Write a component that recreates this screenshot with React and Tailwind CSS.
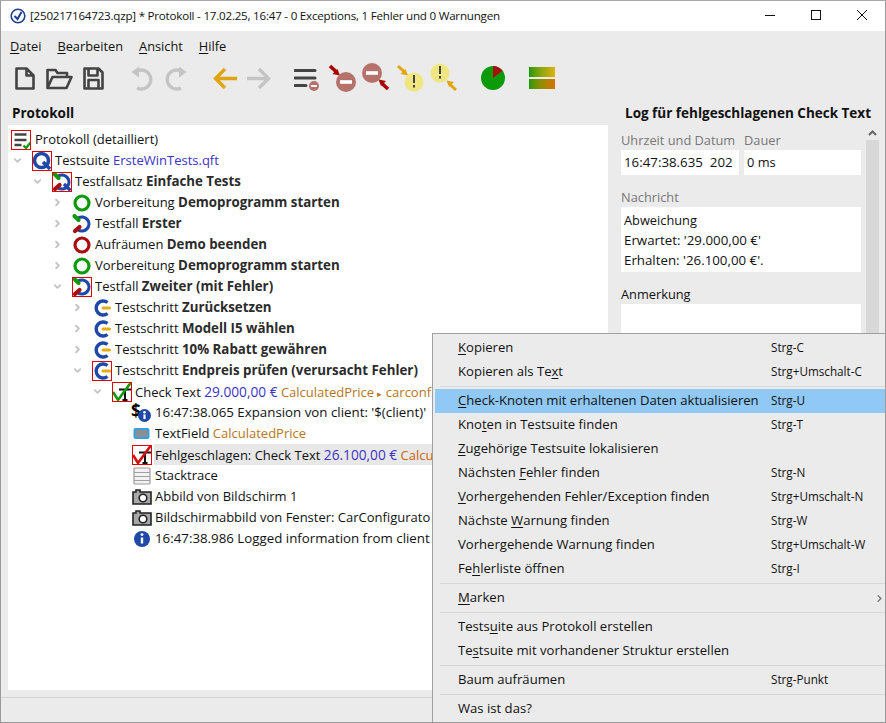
import { ChevronDown, ChevronRight } from 'lucide-react'

const FONT = { fontFamily: '"Open Sans", sans-serif' }

function U({ children }) {
  return <span className="underline underline-offset-2">{children}</span>
}

function Ring({ color = '#0a9a0a' }) {
  return (
    <svg width="20" height="20" viewBox="0 0 20 20">
      <circle cx="10" cy="10" r="7" fill="none" stroke={color} strokeWidth="3.2" />
    </svg>
  )
}

function CaseIcon({ suite }) {
  return (
    <svg width="20" height="20" viewBox="0 0 20 20">
      <path d="M6 4.2A7 7 0 1 1 6 15.8" fill="none" stroke="#1f49a8" strokeWidth="3.2" />
      {suite && <path d="M12 12l6.5 6.5" stroke="#1f49a8" strokeWidth="3.2" />}
      <path d="M2.5 2l4 4" stroke="#0a9a0a" strokeWidth="4" strokeLinecap="round" />
      <path d="M3 17l4.5-4" stroke="#a80e0e" strokeWidth="4.2" strokeLinecap="round" />
    </svg>
  )
}

function SuiteIcon() {
  return (
    <svg width="20" height="20" viewBox="0 0 20 20">
      <circle cx="9.5" cy="9.5" r="7" fill="none" stroke="#1f49a8" strokeWidth="3.6" />
      <path d="M11 11l7 7" stroke="#1f49a8" strokeWidth="3.6" />
    </svg>
  )
}

function StepIcon() {
  return (
    <svg width="20" height="20" viewBox="0 0 20 20">
      <path d="M15.5 4.5A7 7 0 1 0 15.5 15.5" fill="none" stroke="#1f49a8" strokeWidth="3.4" />
      <path d="M11 10h6.5" stroke="#e5ad12" strokeWidth="3" strokeLinecap="round" />
    </svg>
  )
}

function LogIcon() {
  return (
    <svg width="20" height="20" viewBox="0 0 20 20">
      <path d="M3.5 4.5h12M3.5 10h12M3.5 15h7" stroke="#444" strokeWidth="2.4" />
      <path d="M12.5 15.5l2.5 2.5 4.5-5.5" fill="none" stroke="#0a9a0a" strokeWidth="2.2" />
    </svg>
  )
}

function CheckIcon({ color }) {
  return (
    <svg width="20" height="20" viewBox="0 0 20 20">
      <path d="M7 7.5h12M13 7.5v10M10.5 18h5" fill="none" stroke="#111" strokeWidth="2" />
      <path d="M1 10l5 8L18.5 1" fill="none" stroke={color} strokeWidth="2.6" />
    </svg>
  )
}

function InfoIcon() {
  return (
    <svg width="18" height="18" viewBox="0 0 18 18">
      <circle cx="9" cy="9" r="8" fill="#1f49a8" />
      <path d="M9 7.5v6" stroke="#fff" strokeWidth="2.4" />
      <circle cx="9" cy="4.6" r="1.4" fill="#fff" />
    </svg>
  )
}

function DollarInfo() {
  return (
    <span className="relative block w-5 h-5">
      <span className="absolute -left-[1px] -top-[5px] text-[17px] font-bold text-black">$</span>
      <span className="absolute left-[6px] top-[6px]">
        <svg width="13" height="13" viewBox="0 0 18 18">
          <circle cx="9" cy="9" r="9" fill="#1f49a8" />
          <path d="M9 7.5v6.5" stroke="#fff" strokeWidth="3" />
          <circle cx="9" cy="4.4" r="1.8" fill="#fff" />
        </svg>
      </span>
    </span>
  )
}

function FieldIcon() {
  return (
    <svg width="18" height="14" viewBox="0 0 18 14">
      <rect x="1.5" y="2" width="14" height="9" rx="1" fill="#8a8f96" stroke="#38a0e0" strokeWidth="2" />
    </svg>
  )
}

function StackIcon() {
  return (
    <svg width="18" height="18" viewBox="0 0 18 18">
      <rect x="1" y="1" width="16" height="16" rx="1" fill="#f2f2f2" stroke="#9a9a9a" strokeWidth="1.2" />
      <path d="M1 5.5h16M1 9.5h16M1 13.5h16" stroke="#a0a0a0" strokeWidth="1.2" />
    </svg>
  )
}

function CameraIcon() {
  return (
    <svg width="20" height="18" viewBox="0 0 20 18">
      <path d="M1 4h3V2h4v2h11v12H1z" fill="#a8a8a8" stroke="#222" strokeWidth="1.6" />
      <circle cx="11" cy="10" r="3.8" fill="#fff" stroke="#222" strokeWidth="1.6" />
    </svg>
  )
}

function Framed({ children }) {
  return (
    <span className="w-5 h-5 flex items-center justify-center outline outline-1 -outline-offset-1 outline-[#e00000]">
      {children}
    </span>
  )
}

const Blue = ({ children }) => <span className="text-[#3b33c4]">{children}</span>
const Price = ({ children }) => <span className="text-[#3b33c4] text-[13.7px]">{children}</span>
const Amber = ({ children }) => <span className="text-[#b5761a]">{children}</span>
const Stamp = ({ children }) => <span className="text-[13.3px]">{children}</span>

const rows = [
  { level: 0, icon: <Framed><LogIcon /></Framed>, text: <>Protokoll (detailliert)</> },
  { level: 1, open: true, icon: <Framed><SuiteIcon /></Framed>, text: <>Testsuite <Blue>ErsteWinTests.qft</Blue></> },
  { level: 2, open: true, icon: <Framed><CaseIcon suite /></Framed>, text: <>Testfallsatz <b>Einfache Tests</b></> },
  { level: 3, closed: true, icon: <Ring />, text: <>Vorbereitung <b>Demoprogramm starten</b></> },
  { level: 3, closed: true, icon: <CaseIcon />, text: <>Testfall <b>Erster</b></> },
  { level: 3, closed: true, icon: <Ring color="#a80e0e" />, text: <>Aufräumen <b>Demo beenden</b></> },
  { level: 3, closed: true, icon: <Ring />, text: <>Vorbereitung <b>Demoprogramm starten</b></> },
  { level: 3, open: true, icon: <Framed><CaseIcon /></Framed>, text: <>Testfall <b>Zweiter (mit Fehler)</b></> },
  { level: 4, closed: true, icon: <StepIcon />, text: <>Testschritt <b>Zurücksetzen</b></> },
  { level: 4, closed: true, icon: <StepIcon />, text: <>Testschritt <b>Modell I5 wählen</b></> },
  { level: 4, closed: true, icon: <StepIcon />, text: <>Testschritt <b>10% Rabatt gewähren</b></> },
  { level: 4, open: true, icon: <Framed><StepIcon /></Framed>, text: <>Testschritt <b>Endpreis prüfen (verursacht Fehler)</b></> },
  { level: 5, open: true, icon: <Framed><CheckIcon color="#0a9a0a" /></Framed>, text: <>Check Text <Price>29.000,00 €</Price> <Amber>CalculatedPrice <span className="text-[9px]">▸</span> carconf</Amber></> },
  { level: 6, icon: <DollarInfo />, text: <Stamp>16:47:38.065 Expansion von client: '$(client)'</Stamp> },
  { level: 6, icon: <FieldIcon />, text: <>TextField <Amber>CalculatedPrice</Amber></> },
  { level: 6, selected: true, icon: <Framed><CheckIcon color="#d01010" /></Framed>, text: <>Fehlgeschlagen: Check Text <Price>26.100,00 €</Price> <span className="text-[#c9620a]">Calcu</span></> },
  { level: 6, icon: <StackIcon />, text: <>Stacktrace</> },
  { level: 6, icon: <CameraIcon />, text: <>Abbild von Bildschirm 1</> },
  { level: 6, icon: <CameraIcon />, text: <>Bildschirmabbild von Fenster: CarConfigurato</> },
  { level: 6, icon: <InfoIcon />, text: <Stamp>16:47:38.986 Logged information from client</Stamp> },
]

const indent = ['w-[2px]', 'w-[23px]', 'w-[43px]', 'w-[63px]', 'w-[83px]', 'w-[103px]', 'w-[123px]']

function TreeRow({ row }) {
  return (
    <div className="flex items-center h-[21px] whitespace-nowrap">
      <span className={`${indent[row.level]} shrink-0 flex justify-end`}>
        {row.open && <ChevronDown size={11} strokeWidth={4} className="text-[#c4c4c4] mr-[8px]" />}
        {row.closed && <ChevronRight size={11} strokeWidth={4} className="text-[#c4c4c4] mr-[8px]" />}
      </span>
      <span className="w-5 h-5 shrink-0 flex items-center justify-center ml-[1px]">{row.icon}</span>
      <span className={`${row.level === 0 ? 'ml-[3px]' : 'ml-[2px]'} pl-[1px] h-[21px] leading-[21px] grow text-[13px] [&_b]:text-[13.3px] [&_b]:text-[#2b2b2b] ${row.selected ? 'bg-[#e8e8e8]' : ''}`}>{row.text}</span>
    </div>
  )
}

const menu = [
  [
    { label: <><U>K</U>opieren</>, key: 'Strg-C' },
    { label: <>Kopieren als Te<U>x</U>t</>, key: 'Strg+Umschalt-C' },
  ],
  [
    { label: <><U>C</U>heck-Knoten mit erhaltenen Daten aktualisieren</>, key: 'Strg-U', active: true },
    { label: <>Kno<U>t</U>en in Testsuite finden</>, key: 'Strg-T' },
    { label: <><U>Z</U>ugehörige Testsuite lokalisieren</> },
    { label: <>Nächsten <U>F</U>ehler finden</>, key: 'Strg-N' },
    { label: <><U>V</U>orhergehenden Fehler/Exception finden</>, key: 'Strg+Umschalt-N' },
    { label: <>Nächste <U>W</U>arnung finden</>, key: 'Strg-W' },
    { label: <>Vorher<U>g</U>ehende Warnung finden</>, key: 'Strg+Umschalt-W' },
    { label: <>Fe<U>h</U>lerliste öffnen</>, key: 'Strg-I' },
  ],
  [{ label: <><U>M</U>arken</>, sub: true }],
  [
    { label: <>Tests<U>u</U>ite aus Protokoll erstellen</> },
    { label: <>Te<U>s</U>tsuite mit vorhandener Struktur erstellen</> },
  ],
  [{ label: <>Baum aufräumen</>, key: 'Strg-Punkt' }],
  [{ label: <>Was ist das?</> }],
]

function ContextMenu() {
  return (
    <div className="absolute left-[431px] top-[332px] w-[455px] h-[391px] bg-[#ebebeb] border-l border-t border-b border-[#a0a0a0] pt-[2px] pl-[2px] text-[13.1px] text-[#111]">
      {menu.map((group, i) => (
        <div key={i}>
          {i > 0 && <div className="h-px bg-[#d8d8d8] ml-[5px] mr-[2px] mt-[2px] mb-[2px]" />}
          {group.map((item, j) => (
            <div key={j} className={`flex items-center h-[24px] ${item.active ? 'bg-[#90c8f6]' : ''}`}>
              <span className="w-[336px] pl-[23px] shrink-0">{item.label}</span>
              <span className="text-[11.7px] grow">{item.key}</span>
              {item.sub && <ChevronRight size={11} strokeWidth={3} className="text-[#777] mr-[2px]" />}
            </div>
          ))}
        </div>
      ))}
    </div>
  )
}

// viewBox uses window coordinates, so every icon sits where x says
function Tool({ x, w, className, children }) {
  return (
    <svg width={w} height="32" viewBox={`${x} 62 ${w} 32`} className={`shrink-0 ${className || ''}`}>
      {children}
    </svg>
  )
}

function Toolbar() {
  return (
    <div className="flex items-start h-[41px] pt-[2px] pl-[13px] shrink-0">
      <Tool x={14} w={22}>
        <path d="M16.5 68.5h10l7 7v13h-17zM26.5 68.5v7h7" fill="none" stroke="#444" strokeWidth="2.6" strokeLinejoin="round" />
      </Tool>
      <Tool x={45} w={28} className="ml-[9px]">
        <path d="M47.5 88V70h8l2 3h9.5v4M47.5 88l5-11h19l-5 11z" fill="none" stroke="#444" strokeWidth="2.6" strokeLinejoin="round" />
      </Tool>
      <Tool x={82} w={22} className="ml-[9px]">
        <path d="M84.5 68.5h14l4 4v16h-18zM88.5 68.5v7h9v-7M88.5 88v-8h10v8" fill="none" stroke="#444" strokeWidth="2.6" strokeLinejoin="round" />
      </Tool>
      <Tool x={130} w={24} className="ml-[26px]">
        <path d="M137 88A9.5 9.5 0 1 0 137 71" fill="none" stroke="#c4c4c4" strokeWidth="3.4" />
        <path d="M131.5 72l7.5-5.5v11z" fill="#c4c4c4" />
      </Tool>
      <Tool x={164} w={24} className="ml-[10px]">
        <path d="M181 88A9.5 9.5 0 1 1 181 71" fill="none" stroke="#c4c4c4" strokeWidth="3.4" />
        <path d="M186.5 72l-7.5-5.5v11z" fill="#c4c4c4" />
      </Tool>
      <Tool x={212} w={26} className="ml-[24px]">
        <path d="M237 78.5H216M225 69l-9.5 9.5L225 88" fill="none" stroke="#e0a50e" strokeWidth="3.4" />
      </Tool>
      <Tool x={246} w={26} className="ml-[8px]">
        <path d="M247 78.5h21M259 69l9.5 9.5L259 88" fill="none" stroke="#c4c4c4" strokeWidth="3.4" />
      </Tool>
      <Tool x={294} w={27} className="ml-[22px]">
        <path d="M295 70.5h20M295 78h20M295 85.5h11" stroke="#444" strokeWidth="3" strokeLinecap="round" />
        <circle cx="314" cy="86" r="5" fill="#b5726a" />
        <path d="M311 86h6" stroke="#fff" strokeWidth="2" />
      </Tool>
      <Tool x={328} w={29} className="ml-[7px]">
        <path d="M330 66l6 5.5" stroke="#a80000" strokeWidth="3.6" />
        <path d="M340 75.5l-7.5-1.5 5-5z" fill="#a80000" />
        <circle cx="346" cy="82" r="10" fill="#b5726a" />
        <path d="M340 82h12" stroke="#fff" strokeWidth="3.6" />
      </Tool>
      <Tool x={361} w={29} className="ml-[4px]">
        <circle cx="372" cy="73" r="10" fill="#b5726a" />
        <path d="M366 73h12" stroke="#fff" strokeWidth="3.6" />
        <path d="M388 89l-6-5.5" stroke="#a80000" strokeWidth="3.6" />
        <path d="M378.5 79.5l7.5 1.5-5 5z" fill="#a80000" />
      </Tool>
      <Tool x={396} w={29} className="ml-[6px]">
        <path d="M398 66l6 5.5" stroke="#e0a50e" strokeWidth="3" />
        <path d="M408 75.5l-7.5-1.5 5-5z" fill="#e0a50e" />
        <circle cx="414" cy="82" r="9.5" fill="#efe681" />
        <path d="M414 75v8M414 85v2.5" stroke="#444" strokeWidth="2" />
      </Tool>
      <Tool x={429} w={29} className="ml-[4px]">
        <circle cx="440" cy="73" r="9.5" fill="#efe681" />
        <path d="M440 66v8M440 76v2.5" stroke="#444" strokeWidth="2" />
        <path d="M456 90l-6-5.5" stroke="#e0a50e" strokeWidth="3" />
        <path d="M446.5 80.5l7.5 1.5-5 5z" fill="#e0a50e" />
      </Tool>
      <Tool x={480} w={26} className="ml-[22px]">
        <circle cx="493" cy="78" r="12" fill="#0a9a0a" />
        <path d="M493 78V66a12 12 0 0 1 9.5 4.7z" fill="#a80e0e" />
      </Tool>
      <div className="ml-[23px] mt-[5px] flex flex-col gap-[2px]">
        <div className="w-[26px] h-[10px] bg-gradient-to-r from-[#0a9a0a] to-[#e0b010]" />
        <div className="w-[26px] h-[10px] bg-gradient-to-r from-[#0a9a0a] to-[#d97000]" />
      </div>
    </div>
  )
}

export default function App() {
  return (
    <div className="relative w-[886px] h-[723px] overflow-hidden bg-[#ebebeb] border-x border-b border-[#9a9a9a] border-t border-t-[#a8a8a8] flex flex-col text-[12.8px] text-[#111]" style={FONT}>
      {/* title bar */}
      <div className="flex items-center h-[30px] bg-white shrink-0 text-[11.6px] tracking-[-0.22px]">
        <svg width="16" height="16" viewBox="0 0 16 16" className="ml-[9px] mr-[4px]">
          <circle cx="8" cy="8" r="6.8" fill="none" stroke="#1f3f8f" strokeWidth="1.6" />
          <path d="M4.5 8l3 3 4-7" fill="none" stroke="#1f3f8f" strokeWidth="2" />
        </svg>
        <span>[250217164723.qzp] * Protokoll - 17.02.25, 16:47 - 0 Exceptions, 1 Fehler und 0 Warnungen</span>
        <span className="ml-auto flex items-center -mt-[2px]">
          <span className="w-[46px] flex justify-center">
            <svg width="12" height="12" viewBox="0 0 12 12"><path d="M1 6.5h10" stroke="#111" /></svg>
          </span>
          <span className="w-[46px] flex justify-center">
            <svg width="12" height="12" viewBox="0 0 12 12"><rect x="1.5" y="1.5" width="9" height="9" fill="none" stroke="#111" /></svg>
          </span>
          <span className="w-[46px] flex justify-center">
            <svg width="12" height="12" viewBox="0 0 12 12"><path d="M1 1l10 10M11 1L1 11" stroke="#111" /></svg>
          </span>
        </span>
      </div>
      {/* menu bar */}
      <div className="flex items-center h-[29px] pt-[2px] pl-[9px] gap-[16px] shrink-0">
        <span><U>D</U>atei</span>
        <span><U>B</U>earbeiten</span>
        <span><U>A</U>nsicht</span>
        <span><U>H</U>ilfe</span>
      </div>
      <Toolbar />
      <div className="flex grow min-h-0">
        {/* tree */}
        <div className="w-[607px] shrink-0 flex flex-col pl-[7px]">
          <div className="h-[24px] pl-[4px] font-bold text-[13.5px] leading-[24px] shrink-0">Protokoll</div>
          <div className="bg-white h-[565px] pt-[4px] overflow-hidden shrink-0">
            {rows.map((row, i) => (
              <TreeRow key={i} row={row} />
            ))}
          </div>
        </div>
        {/* details */}
        <div className="grow flex flex-col min-w-0">
          <div className="h-[24px] pl-[17px] font-bold text-[13.5px] leading-[24px] whitespace-nowrap shrink-0">Log für fehlgeschlagenen Check Text</div>
          <div className="flex pl-[13px] grow min-h-0">
            <div className="w-[240px] text-[#777]">
              <div className="flex gap-[5px] pt-[6px]">
                <div className="w-[118px]">
                  <div className="h-[19px] leading-[19px] whitespace-nowrap">Uhrzeit und Datum</div>
                  <div className="bg-white h-[25px] leading-[25px] pl-[3px] text-[13.3px] text-[#111] overflow-hidden whitespace-nowrap">16:47:38.635&nbsp; 202</div>
                </div>
                <div className="w-[117px]">
                  <div className="h-[19px] leading-[19px]">Dauer</div>
                  <div className="bg-white h-[25px] leading-[25px] pl-[3px] text-[#111]">0 ms</div>
                </div>
              </div>
              <div className="mt-[13px] h-[19px] leading-[19px]">Nachricht</div>
              <div className="bg-white w-[240px] h-[65px] pl-[3px] py-[3px] text-[#111] leading-[20px]">
                <div>Abweichung</div>
                <div className="text-[13.3px]">Erwartet: '29.000,00 €'</div>
                <div className="text-[13.3px]">Erhalten: '26.100,00 €'.</div>
              </div>
              <div className="mt-[13px] h-[19px] leading-[19px] text-[#111]">Anmerkung</div>
              <div className="bg-white h-[400px] w-[240px]" />
            </div>
            <div className="w-[13px] ml-[5px] flex flex-col">
              <div className="h-[15px] flex items-center justify-center">
                <svg width="9" height="6" viewBox="0 0 9 6"><path d="M1 5l3.5-3.5L8 5" fill="none" stroke="#666" strokeWidth="2" /></svg>
              </div>
              <div className="grow bg-[#d8d8d8]" />
            </div>
          </div>
        </div>
      </div>
      <div className="h-[25px] border-t border-[#d4d4d4] shrink-0" />
      <ContextMenu />
    </div>
  )
}
